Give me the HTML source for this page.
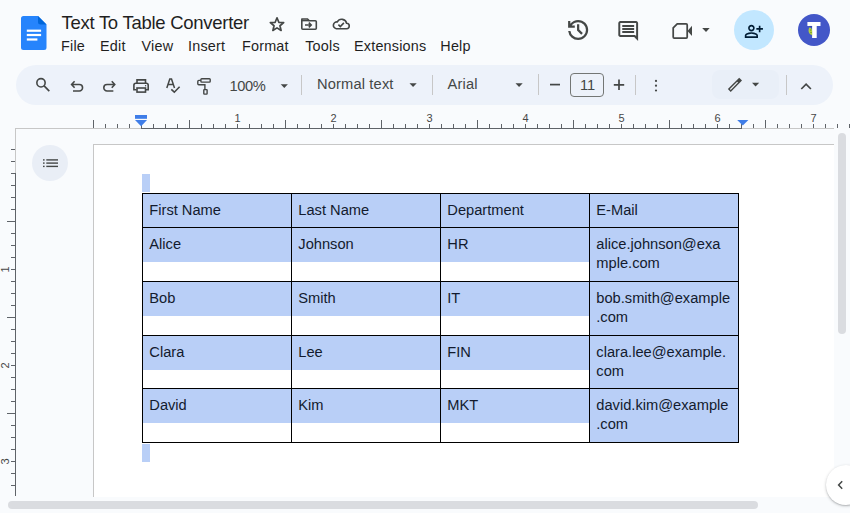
<!DOCTYPE html>
<html><head><meta charset="utf-8">
<style>
html,body{margin:0;padding:0;width:850px;height:513px;overflow:hidden;background:#f9fbfd;font-family:"Liberation Sans",sans-serif;position:relative}
.a{position:absolute}
.t{position:absolute;white-space:pre;line-height:1;color:#1f1f1f}
svg{position:absolute;left:0;top:0;overflow:visible}
.sep{position:absolute;width:1px;background:#c7c7c7}
.tx{position:absolute;white-space:pre;font-size:14.667px;line-height:19px;color:#131b2e}
.hl{position:absolute;background:#b9cff7}
.rn{position:absolute;white-space:pre;font-size:11px;line-height:11px;color:#474747;text-align:center;width:20px}
</style></head><body>
<div class="a" style="left:16px;top:65px;width:817px;height:40px;border-radius:20px;background:#edf2fa"></div>
<div class="a" style="left:93px;top:144px;width:741px;height:353px;background:#fff;border-left:1px solid #c7c7c7;border-top:1px solid #c7c7c7;box-sizing:border-box"></div>
<div class="a" style="left:32px;top:145px;width:36px;height:36px;border-radius:18px;background:#e9eef6"></div>
<svg style="left:21px;top:16px" width="26" height="34" viewBox="0 0 26 34">
<path d="M2.5 0H17L25.5 8.5V31.5A2.5 2.5 0 0 1 23 34H2.5A2.5 2.5 0 0 1 0 31.5V2.5A2.5 2.5 0 0 1 2.5 0Z" fill="#2684fc"/>
<path d="M17 0L25.5 8.5H19.5A2.5 2.5 0 0 1 17 6Z" fill="#0066da"/>
<rect x="5.8" y="13.6" width="14.3" height="2.2" fill="#fff"/>
<rect x="5.8" y="17.9" width="14.3" height="2.2" fill="#fff"/>
<rect x="5.8" y="22.4" width="10.6" height="2.2" fill="#fff"/>
</svg>
<div class="t" style="left:61.5px;top:13.6px;font-size:18.5px;letter-spacing:-0.27px">Text To Table Converter</div>
<div class="t" style="left:61px;top:38.7px;font-size:14.4px;letter-spacing:0.2px">File</div>
<div class="t" style="left:100px;top:38.7px;font-size:14.4px;letter-spacing:0.2px">Edit</div>
<div class="t" style="left:141.5px;top:38.7px;font-size:14.4px;letter-spacing:0.2px">View</div>
<div class="t" style="left:188px;top:38.7px;font-size:14.4px;letter-spacing:0.2px">Insert</div>
<div class="t" style="left:242px;top:38.7px;font-size:14.4px;letter-spacing:0.2px">Format</div>
<div class="t" style="left:305.2px;top:38.7px;font-size:14.4px;letter-spacing:0.2px">Tools</div>
<div class="t" style="left:354px;top:38.7px;font-size:14.4px;letter-spacing:0.2px">Extensions</div>
<div class="t" style="left:440.3px;top:38.7px;font-size:14.4px;letter-spacing:0.2px">Help</div>
<svg width="850" height="513"><polygon points="277.00,17.80 278.82,22.29 283.66,22.64 279.95,25.76 281.11,30.46 277.00,27.90 272.89,30.46 274.05,25.76 270.34,22.64 275.18,22.29" fill="none" stroke="#444746" stroke-width="1.7" stroke-linejoin="round"/><path d="M302 19H307.5L309.3 20.8H315.3A1 1 0 0 1 316.3 21.8V28.2A1 1 0 0 1 315.3 29.2H302.8A1 1 0 0 1 301.8 28.2V19.8Z" fill="none" stroke="#444746" stroke-width="1.6"/><path d="M301.8 20.6H309" fill="none" stroke="#444746" stroke-width="1.5"/><path d="M305 25H311M308.8 22.6L311.2 25L308.8 27.4" fill="none" stroke="#444746" stroke-width="1.6"/><path d="M336.3 28.7H346.5A2.7 2.7 0 0 0 346.6 23.3A5 5 0 0 0 337.3 21.9A3.4 3.4 0 0 0 336.3 28.7Z" fill="none" stroke="#444746" stroke-width="1.6"/><path d="M338.4 24.6L340.3 26.5L343.9 22.9" fill="none" stroke="#444746" stroke-width="1.6"/><g transform="translate(564.75,43.34) scale(0.0279)"><path fill="#444746" d="M480-120q-138 0-240.5-91.5T122-440h82q14 104 92.5 172T480-200q117 0 198.5-81.5T760-480q0-117-81.5-198.5T480-760q-69 0-129 32t-101 88h110v80H120v-240h80v94q51-64 124.5-99T480-840q75 0 140.5 28.5t114 77q48.5 48.5 77 114T840-480q0 75-28.5 140.5t-77 114q-48.5 48.5-114 77T480-120Zm112-192L440-464v-216h80v184l128 128-56 56Z"/></g><g transform="translate(616.32,42.88) scale(0.02475)"><path fill="#444746" d="M240-400h480v-80H240v80Zm0-120h480v-80H240v80Zm0-120h480v-80H240v80ZM880-80 720-240H160q-33 0-56.5-23.5T80-320v-480q0-33 23.5-56.5T160-880h640q33 0 56.5 23.5T880-800v720ZM160-320h594l46 45v-525H160v480Z"/></g><path d="M677.2 23.9H686.2A1 1 0 0 1 687.2 24.9V37A1 1 0 0 1 686.2 38H674.2A1 1 0 0 1 673.2 37V27.9Z" fill="none" stroke="#444746" stroke-width="1.75" stroke-linejoin="round"/><path d="M687.5 31L692 25.8V36Z" fill="#444746"/><path d="M702.2 28H709.7L706 32Z" fill="#444746"/></svg>
<div class="a" style="left:733.5px;top:10px;width:40px;height:40px;border-radius:20px;background:#c2e7ff"></div>
<svg width="850" height="513"><g transform="translate(743.98,42.93) scale(0.0206)"><path fill="#001d35" d="M720-520v-120H600v-80h120v-120h80v120h120v80H800v120h-80Zm-360-40q-66 0-113-47t-47-113q0-66 47-113t113-47q66 0 113 47t47 113q0 66-47 113t-113 47ZM40-240v-112q0-34 17.5-62.5T104-458q62-31 126-46.5T360-520q66 0 130 15.5T616-458q29 15 46.5 43.5T680-352v112H40Zm80-80h480v-32q0-11-5.5-20T580-386q-54-27-109-40.5T360-440q-56 0-111 13.5T140-386q-9 5-14.5 14t-5.5 20v32Zm240-320q33 0 56.5-23.5T440-720q0-33-23.5-56.5T360-800q-33 0-56.5 23.5T280-720q0 33 23.5 56.5T360-640Z"/></g></svg>
<div class="a" style="left:798px;top:13.7px;width:32px;height:32px;border-radius:16px;background:#4357c8"></div>
<svg width="850" height="513"><path d="M807.4 21.9H820.5V25.9H816.7V38H812.1V25.9H807.4Z" fill="#fff"/><path d="M812.1 25.9H809.5V27.2H812.1Z" fill="#2a3a8a" opacity="0.5"/><path d="M809.2 27.5Q812 27.6 812.1 31V35.3Q809.6 35 808.7 32Q808.3 29.4 809.2 27.5Z" fill="#b4d23c"/><circle cx="810.8" cy="30" r="0.5" fill="#39602a"/><circle cx="811" cy="32.6" r="0.5" fill="#39602a"/></svg>
<div class="a" style="left:712px;top:70px;width:67px;height:29px;border-radius:8px;background:#e9eff8"></div>
<svg width="850" height="513"><circle cx="41" cy="82.8" r="4.15" fill="none" stroke="#444746" stroke-width="1.6"/><path d="M44.1 85.9L49.3 91.1" fill="none" stroke="#444746" stroke-width="1.7"/><path d="M74.6 81.3L71.6 84.5L74.6 87.7M71.8 84.5H79.3A3.25 3.25 0 0 1 79.3 91H73" fill="none" stroke="#444746" stroke-width="1.6"/><g transform="translate(186.35,0) scale(-1,1)"><path d="M74.6 81.3L71.6 84.5L74.6 87.7M71.8 84.5H79.3A3.25 3.25 0 0 1 79.3 91H73" fill="none" stroke="#444746" stroke-width="1.6"/></g><path d="M137 83.2V79.9H145.5V83.2" fill="none" stroke="#444746" stroke-width="1.6"/><path d="M136.5 89.7H133.9V85.2A2 2 0 0 1 135.9 83.2H146.2A2 2 0 0 1 148.2 85.2V89.7H145.8" fill="none" stroke="#444746" stroke-width="1.6"/><rect x="137" y="88" width="8.5" height="4.1" fill="none" stroke="#444746" stroke-width="1.6"/><circle cx="145.6" cy="85.7" r="0.7" fill="#444746"/><path d="M166.8 88L169.8 79H171.5L174.5 88M168.1 84.6H173.2" fill="none" stroke="#444746" stroke-width="1.5"/><path d="M171.3 89.4L174.3 92.2L179.6 86.8" fill="none" stroke="#444746" stroke-width="1.6"/><rect x="200.9" y="78.8" width="9.3" height="3.3" rx="0.8" fill="none" stroke="#444746" stroke-width="1.4"/><path d="M200.9 80.4H198.8A1 1 0 0 0 197.8 81.4V83.8A1 1 0 0 0 198.8 84.8H204.9V88.9" fill="none" stroke="#444746" stroke-width="1.4"/><rect x="203.8" y="89.6" width="3.3" height="4.5" rx="0.5" fill="none" stroke="#444746" stroke-width="1.4"/><path d="M280.7 84.3H287.9L284.3 88.1Z" fill="#444746"/><path d="M409.5 83.3H416.7L413.1 87.1Z" fill="#444746"/><path d="M515.5 83.3H522.7L519.1 87.1Z" fill="#444746"/><path d="M752 82.8H759.2L755.6 86.6Z" fill="#444746"/><path d="M550 84.6H560" fill="none" stroke="#444746" stroke-width="1.7"/><path d="M613.8 84.8H624.2M619 79.6V90" fill="none" stroke="#444746" stroke-width="1.7"/><circle cx="656" cy="80.9" r="1.1" fill="#444746"/><circle cx="656" cy="85.7" r="1.1" fill="#444746"/><circle cx="656" cy="90.5" r="1.1" fill="#444746"/><path d="M729.3 90.5L740.6 79.2" fill="none" stroke="#444746" stroke-width="4"/><path d="M730.3 89.5L737.6 82.2" fill="none" stroke="#f1f5fa" stroke-width="1.1"/><path d="M801.3 89L806.1 84.2L810.9 89" fill="none" stroke="#444746" stroke-width="1.7"/></svg>
<div class="t" style="left:229.5px;top:78.5px;font-size:14.667px;letter-spacing:-0.4px;color:#444746">100%</div>
<div class="t" style="left:317px;top:77.4px;font-size:14.667px;letter-spacing:0.15px;color:#444746">Normal text</div>
<div class="t" style="left:447.5px;top:77.4px;font-size:14.667px;letter-spacing:0.2px;color:#444746">Arial</div>
<div class="a" style="left:570px;top:73px;width:34px;height:23.5px;border:1px solid #747775;border-radius:4px;box-sizing:border-box"></div>
<div class="t" style="left:580px;top:78px;font-size:14.667px;color:#444746">11</div>
<div class="sep" style="left:301px;top:75px;height:20px"></div>
<div class="sep" style="left:432px;top:75px;height:20px"></div>
<div class="sep" style="left:538px;top:74px;height:21px"></div>
<div class="sep" style="left:635px;top:75px;height:20px"></div>
<div class="sep" style="left:786px;top:75px;height:20px"></div>
<svg width="850" height="513"><rect x="43" y="159.2" width="1.6" height="1.4" fill="#444746"/><rect x="46.3" y="159.2" width="11.7" height="1.4" fill="#444746"/><rect x="43" y="162.4" width="1.6" height="1.4" fill="#444746"/><rect x="46.3" y="162.4" width="11.7" height="1.4" fill="#444746"/><rect x="43" y="165.7" width="1.6" height="1.4" fill="#444746"/><rect x="46.3" y="165.7" width="11.7" height="1.4" fill="#444746"/></svg>
<div class="a" style="left:15px;top:128px;width:126px;height:1px;background:#c7c7c7"></div>
<div class="a" style="left:141px;top:128px;width:601px;height:1px;background:#5f6368"></div>
<div class="a" style="left:742px;top:128px;width:92px;height:1px;background:#c7c7c7"></div>
<div class="a" style="left:15px;top:128px;width:1px;height:45px;background:#c7c7c7"></div>
<div class="a" style="left:15px;top:173px;width:1px;height:323px;background:#5f6368"></div>
<svg width="850" height="513"><rect x="93" y="120" width="1" height="8" fill="#5f6368"/><rect x="105" y="124" width="1" height="4" fill="#5f6368"/><rect x="117" y="124" width="1" height="4" fill="#5f6368"/><rect x="129" y="124" width="1" height="4" fill="#5f6368"/><rect x="141" y="124" width="1" height="4" fill="#5f6368"/><rect x="153" y="124" width="1" height="4" fill="#5f6368"/><rect x="165" y="124" width="1" height="4" fill="#5f6368"/><rect x="177" y="124" width="1" height="4" fill="#5f6368"/><rect x="189" y="120" width="1" height="8" fill="#5f6368"/><rect x="201" y="124" width="1" height="4" fill="#5f6368"/><rect x="213" y="124" width="1" height="4" fill="#5f6368"/><rect x="225" y="124" width="1" height="4" fill="#5f6368"/><rect x="237" y="124" width="1" height="4" fill="#5f6368"/><rect x="249" y="124" width="1" height="4" fill="#5f6368"/><rect x="261" y="124" width="1" height="4" fill="#5f6368"/><rect x="273" y="124" width="1" height="4" fill="#5f6368"/><rect x="285" y="120" width="1" height="8" fill="#5f6368"/><rect x="297" y="124" width="1" height="4" fill="#5f6368"/><rect x="309" y="124" width="1" height="4" fill="#5f6368"/><rect x="321" y="124" width="1" height="4" fill="#5f6368"/><rect x="333" y="124" width="1" height="4" fill="#5f6368"/><rect x="345" y="124" width="1" height="4" fill="#5f6368"/><rect x="357" y="124" width="1" height="4" fill="#5f6368"/><rect x="369" y="124" width="1" height="4" fill="#5f6368"/><rect x="381" y="120" width="1" height="8" fill="#5f6368"/><rect x="393" y="124" width="1" height="4" fill="#5f6368"/><rect x="405" y="124" width="1" height="4" fill="#5f6368"/><rect x="417" y="124" width="1" height="4" fill="#5f6368"/><rect x="429" y="124" width="1" height="4" fill="#5f6368"/><rect x="441" y="124" width="1" height="4" fill="#5f6368"/><rect x="453" y="124" width="1" height="4" fill="#5f6368"/><rect x="465" y="124" width="1" height="4" fill="#5f6368"/><rect x="477" y="120" width="1" height="8" fill="#5f6368"/><rect x="489" y="124" width="1" height="4" fill="#5f6368"/><rect x="501" y="124" width="1" height="4" fill="#5f6368"/><rect x="513" y="124" width="1" height="4" fill="#5f6368"/><rect x="525" y="124" width="1" height="4" fill="#5f6368"/><rect x="537" y="124" width="1" height="4" fill="#5f6368"/><rect x="549" y="124" width="1" height="4" fill="#5f6368"/><rect x="561" y="124" width="1" height="4" fill="#5f6368"/><rect x="573" y="120" width="1" height="8" fill="#5f6368"/><rect x="585" y="124" width="1" height="4" fill="#5f6368"/><rect x="597" y="124" width="1" height="4" fill="#5f6368"/><rect x="609" y="124" width="1" height="4" fill="#5f6368"/><rect x="621" y="124" width="1" height="4" fill="#5f6368"/><rect x="633" y="124" width="1" height="4" fill="#5f6368"/><rect x="645" y="124" width="1" height="4" fill="#5f6368"/><rect x="657" y="124" width="1" height="4" fill="#5f6368"/><rect x="669" y="120" width="1" height="8" fill="#5f6368"/><rect x="681" y="124" width="1" height="4" fill="#5f6368"/><rect x="693" y="124" width="1" height="4" fill="#5f6368"/><rect x="705" y="124" width="1" height="4" fill="#5f6368"/><rect x="717" y="124" width="1" height="4" fill="#5f6368"/><rect x="729" y="124" width="1" height="4" fill="#5f6368"/><rect x="741" y="124" width="1" height="4" fill="#5f6368"/><rect x="753" y="124" width="1" height="4" fill="#5f6368"/><rect x="765" y="120" width="1" height="8" fill="#5f6368"/><rect x="777" y="124" width="1" height="4" fill="#5f6368"/><rect x="789" y="124" width="1" height="4" fill="#5f6368"/><rect x="801" y="124" width="1" height="4" fill="#5f6368"/><rect x="813" y="124" width="1" height="4" fill="#5f6368"/><rect x="825" y="124" width="1" height="4" fill="#5f6368"/><rect x="837" y="124" width="1" height="4" fill="#5f6368"/><rect x="849" y="124" width="1" height="4" fill="#5f6368"/><rect x="11" y="149" width="4" height="1" fill="#5f6368"/><rect x="11" y="161" width="4" height="1" fill="#5f6368"/><rect x="11" y="173" width="4" height="1" fill="#5f6368"/><rect x="11" y="185" width="4" height="1" fill="#5f6368"/><rect x="11" y="197" width="4" height="1" fill="#5f6368"/><rect x="11" y="209" width="4" height="1" fill="#5f6368"/><rect x="7" y="221" width="8" height="1" fill="#5f6368"/><rect x="11" y="233" width="4" height="1" fill="#5f6368"/><rect x="11" y="245" width="4" height="1" fill="#5f6368"/><rect x="11" y="257" width="4" height="1" fill="#5f6368"/><rect x="11" y="269" width="4" height="1" fill="#5f6368"/><rect x="11" y="281" width="4" height="1" fill="#5f6368"/><rect x="11" y="293" width="4" height="1" fill="#5f6368"/><rect x="11" y="305" width="4" height="1" fill="#5f6368"/><rect x="7" y="317" width="8" height="1" fill="#5f6368"/><rect x="11" y="329" width="4" height="1" fill="#5f6368"/><rect x="11" y="341" width="4" height="1" fill="#5f6368"/><rect x="11" y="353" width="4" height="1" fill="#5f6368"/><rect x="11" y="365" width="4" height="1" fill="#5f6368"/><rect x="11" y="377" width="4" height="1" fill="#5f6368"/><rect x="11" y="389" width="4" height="1" fill="#5f6368"/><rect x="11" y="401" width="4" height="1" fill="#5f6368"/><rect x="7" y="413" width="8" height="1" fill="#5f6368"/><rect x="11" y="425" width="4" height="1" fill="#5f6368"/><rect x="11" y="437" width="4" height="1" fill="#5f6368"/><rect x="11" y="449" width="4" height="1" fill="#5f6368"/><rect x="11" y="461" width="4" height="1" fill="#5f6368"/><rect x="11" y="473" width="4" height="1" fill="#5f6368"/><rect x="11" y="485" width="4" height="1" fill="#5f6368"/><rect x="135" y="115" width="12" height="3.8" fill="#3f7de8"/><path d="M135 120H147L141.1 126.2Z" fill="#3f7de8"/><path d="M737.2 120H748.4L742.8 125.6Z" fill="#3f7de8"/></svg>
<div class="rn" style="left:227.5px;top:113px">1</div>
<div class="rn" style="left:323.5px;top:113px">2</div>
<div class="rn" style="left:419.5px;top:113px">3</div>
<div class="rn" style="left:515.5px;top:113px">4</div>
<div class="rn" style="left:611.5px;top:113px">5</div>
<div class="rn" style="left:707.5px;top:113px">6</div>
<div class="rn" style="left:803.5px;top:113px">7</div>
<div class="rn" style="left:-5px;top:264px;transform:rotate(-90deg)">1</div>
<div class="rn" style="left:-5px;top:360px;transform:rotate(-90deg)">2</div>
<div class="rn" style="left:-5px;top:456px;transform:rotate(-90deg)">3</div>
<div class="hl" style="left:143px;top:194px;width:148px;height:33px"></div>
<div class="hl" style="left:292px;top:194px;width:148px;height:33px"></div>
<div class="hl" style="left:441px;top:194px;width:148px;height:33px"></div>
<div class="hl" style="left:590px;top:194px;width:148px;height:33px"></div>
<div class="hl" style="left:143px;top:228px;width:148px;height:34px"></div>
<div class="hl" style="left:292px;top:228px;width:148px;height:34px"></div>
<div class="hl" style="left:441px;top:228px;width:148px;height:34px"></div>
<div class="hl" style="left:590px;top:228px;width:148px;height:53px"></div>
<div class="hl" style="left:143px;top:282px;width:148px;height:34px"></div>
<div class="hl" style="left:292px;top:282px;width:148px;height:34px"></div>
<div class="hl" style="left:441px;top:282px;width:148px;height:34px"></div>
<div class="hl" style="left:590px;top:282px;width:148px;height:53px"></div>
<div class="hl" style="left:143px;top:336px;width:148px;height:34px"></div>
<div class="hl" style="left:292px;top:336px;width:148px;height:34px"></div>
<div class="hl" style="left:441px;top:336px;width:148px;height:34px"></div>
<div class="hl" style="left:590px;top:336px;width:148px;height:52px"></div>
<div class="hl" style="left:143px;top:389px;width:148px;height:34px"></div>
<div class="hl" style="left:292px;top:389px;width:148px;height:34px"></div>
<div class="hl" style="left:441px;top:389px;width:148px;height:34px"></div>
<div class="hl" style="left:590px;top:389px;width:148px;height:53px"></div>
<div class="hl" style="left:142px;top:174px;width:8px;height:18px"></div>
<div class="hl" style="left:142px;top:444px;width:8px;height:18px"></div>
<div class="a" style="left:142px;top:193px;width:1px;height:250px;background:#000"></div>
<div class="a" style="left:291px;top:193px;width:1px;height:250px;background:#000"></div>
<div class="a" style="left:440px;top:193px;width:1px;height:250px;background:#000"></div>
<div class="a" style="left:589px;top:193px;width:1px;height:250px;background:#000"></div>
<div class="a" style="left:738px;top:193px;width:1px;height:250px;background:#000"></div>
<div class="a" style="left:142px;top:193px;width:597px;height:1px;background:#000"></div>
<div class="a" style="left:142px;top:227px;width:597px;height:1px;background:#000"></div>
<div class="a" style="left:142px;top:281px;width:597px;height:1px;background:#000"></div>
<div class="a" style="left:142px;top:335px;width:597px;height:1px;background:#000"></div>
<div class="a" style="left:142px;top:388px;width:597px;height:1px;background:#000"></div>
<div class="a" style="left:142px;top:442px;width:597px;height:1px;background:#000"></div>
<div class="tx" style="left:149.3px;top:200.52px">First Name</div>
<div class="tx" style="left:298.3px;top:200.52px">Last Name</div>
<div class="tx" style="left:447.3px;top:200.52px">Department</div>
<div class="tx" style="left:596.3px;top:200.52px">E-Mail</div>
<div class="tx" style="left:149.3px;top:234.52px">Alice</div>
<div class="tx" style="left:298.3px;top:234.52px">Johnson</div>
<div class="tx" style="left:447.3px;top:234.52px">HR</div>
<div class="tx" style="left:596.3px;top:234.52px">alice.johnson@exa</div>
<div class="tx" style="left:596.3px;top:254.32px">mple.com</div>
<div class="tx" style="left:149.3px;top:288.52px">Bob</div>
<div class="tx" style="left:298.3px;top:288.52px">Smith</div>
<div class="tx" style="left:447.3px;top:288.52px">IT</div>
<div class="tx" style="left:596.3px;top:288.52px">bob.smith@example</div>
<div class="tx" style="left:596.3px;top:308.32px">.com</div>
<div class="tx" style="left:149.3px;top:342.52px">Clara</div>
<div class="tx" style="left:298.3px;top:342.52px">Lee</div>
<div class="tx" style="left:447.3px;top:342.52px">FIN</div>
<div class="tx" style="left:596.3px;top:342.52px">clara.lee@example.</div>
<div class="tx" style="left:596.3px;top:361.52px">com</div>
<div class="tx" style="left:149.3px;top:396.12px">David</div>
<div class="tx" style="left:298.3px;top:396.12px">Kim</div>
<div class="tx" style="left:447.3px;top:396.12px">MKT</div>
<div class="tx" style="left:596.3px;top:396.12px">david.kim@example</div>
<div class="tx" style="left:596.3px;top:415.42px">.com</div>
<div class="a" style="left:838px;top:133px;width:8px;height:201px;border-radius:4px;background:#dadce0"></div>
<div class="a" style="left:8px;top:501px;width:750px;height:8px;border-radius:4px;background:#dadce0"></div>
<div class="a" style="left:825.5px;top:465px;width:40px;height:40px;border-radius:20px;background:#fff;box-shadow:0 1px 3px rgba(60,64,67,.3),0 1px 1px rgba(60,64,67,.15)"></div>
<svg width="850" height="513"><path d="M842.2 481.2L838.6 485L842.2 488.8" fill="none" stroke="#444746" stroke-width="1.5"/></svg>
</body></html>
